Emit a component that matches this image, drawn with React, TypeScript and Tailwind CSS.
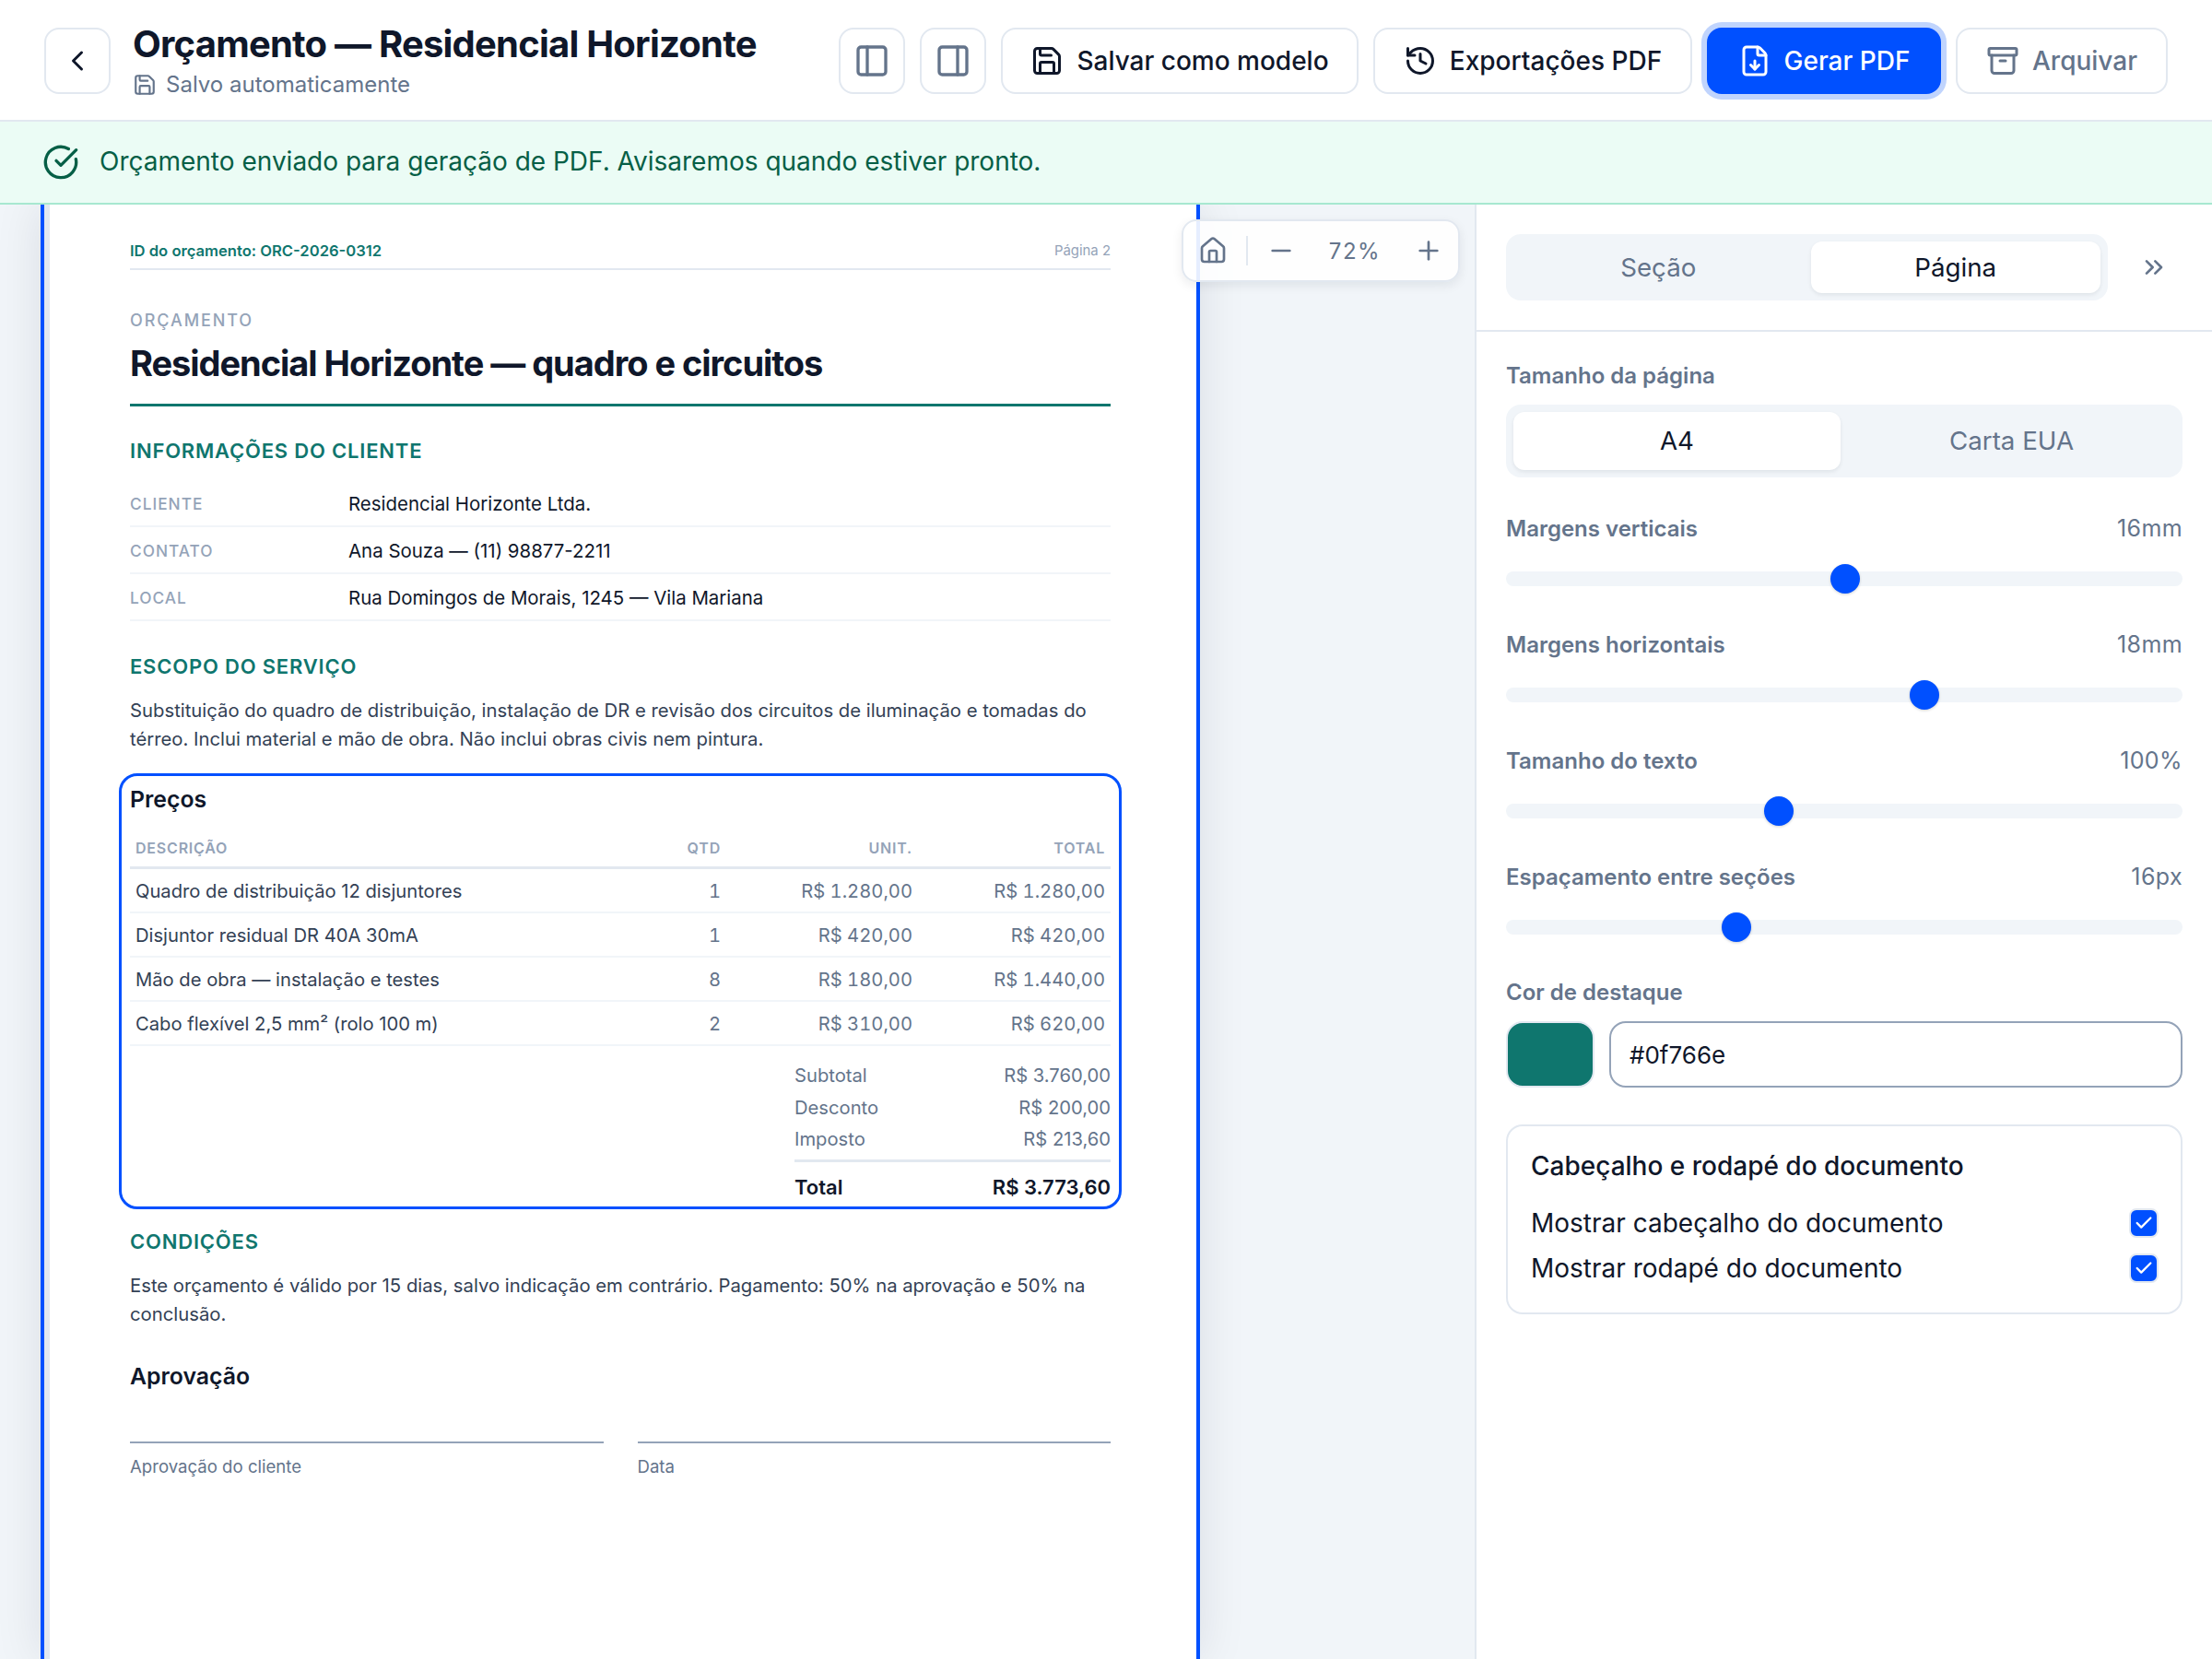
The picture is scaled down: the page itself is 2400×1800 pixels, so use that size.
import {
	Archive,
	Check,
	ChevronLeft,
	ChevronsRight,
	CircleCheckBig,
	FileDown,
	History,
	House,
	Minus,
	PanelLeft,
	PanelRight,
	Plus,
	Save,
} from "lucide-react";
import type { FC, ReactNode } from "react";

const clientRows = [
	["CLIENTE", "Residencial Horizonte Ltda."],
	["CONTATO", "Ana Souza — (11) 98877-2211"],
	["LOCAL", "Rua Domingos de Morais, 1245 — Vila Mariana"],
];

const priceRows = [
	["Quadro de distribuição 12 disjuntores", "1", "R$ 1.280,00", "R$ 1.280,00"],
	["Disjuntor residual DR 40A 30mA", "1", "R$ 420,00", "R$ 420,00"],
	["Mão de obra — instalação e testes", "8", "R$ 180,00", "R$ 1.440,00"],
	["Cabo flexível 2,5 mm² (rolo 100 m)", "2", "R$ 310,00", "R$ 620,00"],
];

const totals = [
	["Subtotal", "R$ 3.760,00"],
	["Desconto", "R$ 200,00"],
	["Imposto", "R$ 213,60"],
];

const sliders = [
	{ label: "Margens verticais", value: "16mm", left: 368 },
	{ label: "Margens horizontais", value: "18mm", left: 454 },
	{ label: "Tamanho do texto", value: "100%", left: 296 },
	{ label: "Espaçamento entre seções", value: "16px", left: 250 },
];

const IconButton: FC<{ children: ReactNode }> = ({ children }) => (
	<button
		type="button"
		className="flex h-[72px] w-[72px] items-center justify-center rounded-[16px] border-2 border-[#e2e8f0] bg-white text-[#64748b]"
	>
		{children}
	</button>
);

const ActionButton: FC<{ children: ReactNode; className: string }> = ({ children, className }) => (
	<button
		type="button"
		className={`flex h-[72px] items-center justify-center gap-[14px] rounded-[16px] text-[28px] font-medium ${className}`}
	>
		{children}
	</button>
);

const SectionTitle: FC<{ children: ReactNode; className: string }> = ({ children, className }) => (
	<h2 className={`text-[22px] leading-[28px] font-semibold tracking-[0.8px] text-[#0f766e] ${className}`}>
		{children}
	</h2>
);

const Header = () => (
	<header className="flex h-[132px] shrink-0 items-start justify-between border-b-2 border-[#e2e8f0] bg-white px-[48px] pt-[30px]">
		<div className="flex items-start gap-[24px]">
			<button
				type="button"
				className="flex h-[72px] w-[72px] items-center justify-center rounded-[16px] border-2 border-[#e2e8f0] bg-white text-[#0f172a]"
			>
				<ChevronLeft size={36} />
			</button>
			<div>
				<h1 className="-mt-[6px] text-[40px] leading-[48px] font-bold tracking-[-0.78px] text-[#0f172a]">
					Orçamento — Residencial Horizonte
				</h1>
				<div className="mt-[4px] flex items-center gap-[10px] text-[24px] leading-[32px] text-[#64748b]">
					<Save size={26} />
					Salvo automaticamente
				</div>
			</div>
		</div>
		<div className="flex gap-[16px]">
			<IconButton>
				<PanelLeft size={40} strokeWidth={2} />
			</IconButton>
			<IconButton>
				<PanelRight size={40} strokeWidth={2} />
			</IconButton>
			<ActionButton className="w-[388px] border-2 border-[#e2e8f0] bg-white text-[#0f172a]">
				<Save size={36} />
				Salvar como modelo
			</ActionButton>
			<ActionButton className="w-[346px] border-2 border-[#e2e8f0] bg-white text-[#0f172a]">
				<History size={36} />
				Exportações PDF
			</ActionButton>
			<ActionButton className="w-[254px] bg-[#0050ff] text-white ring-[6px] ring-[#c0d4fd]">
				<FileDown size={36} />
				Gerar PDF
			</ActionButton>
			<ActionButton className="w-[230px] border-2 border-[#e2e8f0] bg-white text-[#64748b]">
				<Archive size={36} />
				Arquivar
			</ActionButton>
		</div>
	</header>
);

const Banner = () => (
	<div className="flex h-[90px] shrink-0 items-center gap-[22px] border-b-2 border-[#a7e8d0] bg-[#ebfcf5] px-[46px] text-[28px] text-[#065f46]">
		<CircleCheckBig size={40} />
		<span className="-mt-[3px]">Orçamento enviado para geração de PDF. Avisaremos quando estiver pronto.</span>
	</div>
);

const PriceBlock = () => (
	<section className="mt-[22px] -mx-[12px] h-[473px] rounded-[20px] border-[3px] border-[#0050ff] px-[9px] pt-[10px]">
		<h3 className="text-[24.8px] leading-[30px] font-semibold text-[#0f172a]">Preços</h3>
		<div className="mt-[17px] grid h-[44px] grid-cols-[1fr_120px_208px_209px] items-center border-b-[3px] border-[#e2e8f0] px-[6px] text-right text-[16px] font-semibold tracking-[0.8px] text-[#94a3b8]">
			<span className="text-left">DESCRIÇÃO</span>
			<span>QTD</span>
			<span>UNIT.</span>
			<span>TOTAL</span>
		</div>
		{priceRows.map((row) => (
			<div
				key={row[0]}
				className="grid h-[48px] grid-cols-[1fr_120px_208px_209px] items-center border-b-2 border-[#f1f5f9] px-[6px] pt-[2px] text-right text-[20.2px] text-[#64748b]"
			>
				<span className="text-left text-[#334155]">{row[0]}</span>
				<span className="tabular-nums">{row[1]}</span>
				<span className="tabular-nums">{row[2]}</span>
				<span className="tabular-nums">{row[3]}</span>
			</div>
		))}
		<div className="ml-auto w-[343px] pt-[15px]">
			{totals.map(([label, value]) => (
				<div key={label} className="flex h-[34.5px] items-center justify-between text-[20.2px] text-[#64748b]">
					<span>{label}</span>
					<span>{value}</span>
				</div>
			))}
			<div className="mt-[4px] flex items-start justify-between border-t-[3px] border-[#e2e8f0] pt-[12px] text-[22px] leading-[30px] font-semibold text-[#0f172a]">
				<span>Total</span>
				<span>R$ 3.773,60</span>
			</div>
		</div>
	</section>
);

const DocumentPage = () => (
	<div className="ml-[44px] h-full w-[1258px] border-x-4 border-[#0050ff] shadow-[0_0_48px_rgba(15,23,42,0.1)]">
		<article className="h-full border-l-[6px] border-[#e2e8f0] bg-white pr-[93px] pl-[87px]">
			<div className="flex h-[71px] items-end justify-between border-b-2 border-[#e2e8f0] pb-[7px]">
				<span className="text-[16.6px] leading-[24px] font-semibold text-[#0f766e]">
					ID do orçamento: ORC-2026-0312
				</span>
				<span className="text-[14.9px] leading-[24px] text-[#94a3b8]">Página 2</span>
			</div>
			<p className="mt-[43px] text-[18px] leading-[24px] font-medium tracking-[1.9px] text-[#94a3b8]">ORÇAMENTO</p>
			<div className="mt-[10px] border-b-[3px] border-[#0f766e] pb-[20px]">
				<h2 className="text-[38px] leading-[48px] font-bold tracking-[-1.03px] text-[#0f172a]">
					Residencial Horizonte — quadro e circuitos
				</h2>
			</div>
			<SectionTitle className="mt-[34px]">INFORMAÇÕES DO CLIENTE</SectionTitle>
			<div className="mt-[18px]">
				{clientRows.map(([label, value]) => (
					<div key={label} className="flex h-[51px] items-center border-b-2 border-[#f1f5f9] pt-[3px]">
						<span className="w-[237px] shrink-0 text-[17.3px] font-medium tracking-[1px] text-[#94a3b8]">{label}</span>
						<span className="text-[20.45px] text-[#0f172a]">{value}</span>
					</div>
				))}
			</div>
			<SectionTitle className="mt-[35px]">ESCOPO DO SERVIÇO</SectionTitle>
			<p className="mt-[18px] text-[20.3px] leading-[31px] text-[#334155]">
				Substituição do quadro de distribuição, instalação de DR e revisão dos circuitos de iluminação e tomadas do térreo. Inclui material e mão de obra. Não inclui obras civis nem pintura.
			</p>
			<PriceBlock />
			<SectionTitle className="mt-[21px]">CONDIÇÕES</SectionTitle>
			<p className="mt-[18px] text-[20.3px] leading-[31px] text-[#334155]">
				Este orçamento é válido por 15 dias, salvo indicação em contrário. Pagamento: 50% na aprovação e 50% na conclusão.
			</p>
			<h3 className="mt-[36px] text-[24.8px] leading-[32px] font-semibold text-[#0f172a]">Aprovação</h3>
			<div className="mt-[55px] grid grid-cols-2 gap-[37px]">
				<div className="border-t-2 border-[#94a3b8] pt-[13px] text-[18.6px] leading-[24px] text-[#64748b]">Aprovação do cliente</div>
				<div className="border-t-2 border-[#94a3b8] pt-[13px] text-[18.6px] leading-[24px] text-[#64748b]">Data</div>
			</div>
		</article>
	</div>
);

const Canvas = () => (
	<main className="relative h-full w-[1600px] shrink-0 overflow-hidden bg-[#f1f5f9]">
		<DocumentPage />
		<div className="absolute top-[16px] left-[1282px] flex h-[68px] w-[302px] items-center rounded-[16px] border-2 border-[#e2e8f0] bg-white/90 pl-[16px] text-[#64748b] shadow-[0_4px_12px_rgba(15,23,42,0.08)]">
			<House size={32} />
			<span className="mx-[20px] h-[32px] w-[2px] bg-[#e2e8f0]" />
			<Minus size={32} />
			<span className="w-[128px] pt-[2px] text-center text-[24px] tracking-[1.6px]">72%</span>
			<Plus size={32} />
		</div>
	</main>
);

const SliderField: FC<{ label: string; value: string; left: number }> = ({ label, value, left }) => (
	<div className="mb-[41px]">
		<div className="flex h-[28px] items-center justify-between pt-[2px] text-[24px]">
			<span className="font-semibold text-[#64748b]">{label}</span>
			<span className="text-[25px] tracking-[0.4px] text-[#64748b]">{value}</span>
		</div>
		<div className="relative mt-[25px] flex h-[32px] items-center">
			<div className="h-[16px] w-full rounded-full bg-[#f1f5f9]" />
			<div
				className="absolute top-0 h-[32px] w-[32px] -translate-x-1/2 rounded-full bg-[#0050ff] shadow-[0_1px_3px_rgba(15,23,42,0.2)]"
				style={{ left }}
			/>
		</div>
	</div>
);

const CheckRow: FC<{ label: string }> = ({ label }) => (
	<div className="flex h-[49px] items-center justify-between text-[28px] text-[#0f172a]">
		{label}
		<span className="flex h-[32px] w-[32px] items-center justify-center rounded-[8px] border-2 border-[#e2e8f0] bg-[#0050ff] text-white">
			<Check size={22} strokeWidth={2.5} />
		</span>
	</div>
);

const SettingsPanel = () => (
	<aside className="h-full w-[800px] border-l-2 border-[#e2e8f0] bg-white">
		<div className="flex items-center border-b-2 border-[#e2e8f0] px-[32px] py-[32px]">
			<div className="grid h-[72px] w-[653px] grid-cols-2 gap-[8px] rounded-[16px] bg-[#f1f5f9] p-[8px] text-[27.7px]">
				<div className="flex items-center justify-center pt-[1px] text-[#64748b]">Seção</div>
				<div className="flex items-center justify-center rounded-[12px] bg-white pt-[1px] text-[#0f172a] shadow-[0_2px_4px_rgba(15,23,42,0.08)]">Página</div>
			</div>
			<ChevronsRight size={32} className="ml-[34px] text-[#64748b]" />
		</div>
		<div className="px-[32px] pt-[34px]">
			<p className="text-[24px] leading-[28px] font-semibold text-[#64748b]">Tamanho da página</p>
			<div className="mt-[17px] grid h-[79px] grid-cols-2 gap-[8px] rounded-[16px] bg-[#f1f5f9] p-[8px] text-[27.7px]">
				<div className="flex items-center justify-center rounded-[12px] bg-white pt-[1px] text-[#0f172a] shadow-[0_2px_4px_rgba(15,23,42,0.08)]">A4</div>
				<div className="flex items-center justify-center pt-[1px] text-[#64748b]">Carta EUA</div>
			</div>
			<div className="mt-[41px]">
				{sliders.map((slider) => (
					<SliderField key={slider.label} {...slider} />
				))}
			</div>
			<p className="text-[24px] leading-[28px] font-semibold text-[#64748b]">Cor de destaque</p>
			<div className="mt-[17px] flex gap-[16px]">
				<div className="h-[72px] w-[96px] rounded-[18px] border-2 border-[#e2e8f0] bg-[#0f766e]" />
				<div className="flex h-[72px] flex-1 items-center rounded-[18px] border-2 border-[#94a3b8] bg-white pt-[1px] pl-[20px] text-[26px] text-[#0f172a]">
					#0f766e
				</div>
			</div>
			<div className="mt-[40px] h-[206px] rounded-[18px] border-2 border-[#e2e8f0] pt-[25px] pr-[24px] pl-[25px]">
				<p className="text-[28px] leading-[36px] font-medium text-[#0f172a]">Cabeçalho e rodapé do documento</p>
				<div className="mt-[19px]">
					<CheckRow label="Mostrar cabeçalho do documento" />
					<CheckRow label="Mostrar rodapé do documento" />
				</div>
			</div>
		</div>
	</aside>
);

export default function App() {
	return (
		<div className="flex h-[1800px] w-[2400px] flex-col overflow-hidden bg-white [font-family:Inter,sans-serif]">
			<Header />
			<Banner />
			<div className="flex min-h-0 flex-1">
				<Canvas />
				<SettingsPanel />
			</div>
		</div>
	);
}
